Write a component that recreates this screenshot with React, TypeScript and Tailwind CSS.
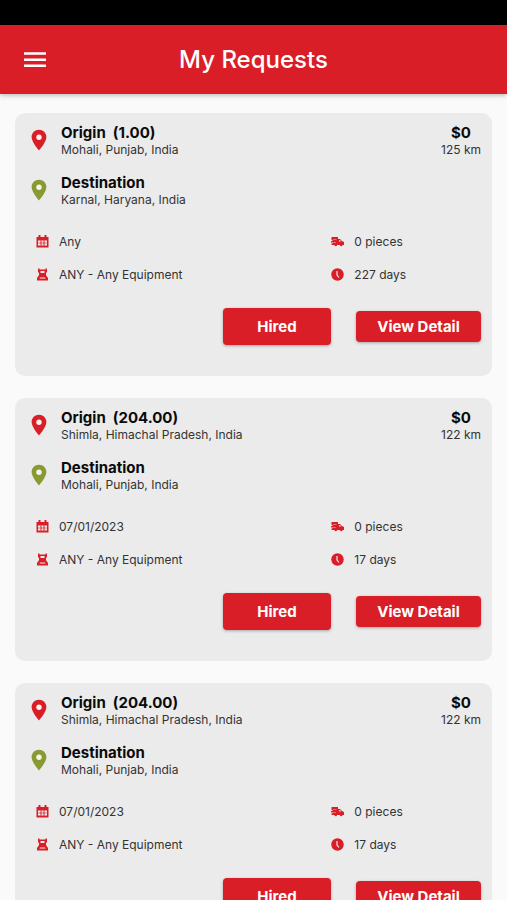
interface Request {
  id: number;
  weight: string;
  origin: string;
  destination: string;
  price: string;
  distance: string;
  date: string;
  equipment: string;
  pieces: string;
  age: string;
}

const requests: Request[] = [
  {
    id: 1,
    weight: "1.00",
    origin: "Mohali, Punjab, India",
    destination: "Karnal, Haryana, India",
    price: "$0",
    distance: "125 km",
    date: "Any",
    equipment: "ANY - Any Equipment",
    pieces: "0 pieces",
    age: "227 days",
  },
  {
    id: 2,
    weight: "204.00",
    origin: "Shimla, Himachal Pradesh, India",
    destination: "Mohali, Punjab, India",
    price: "$0",
    distance: "122 km",
    date: "07/01/2023",
    equipment: "ANY - Any Equipment",
    pieces: "0 pieces",
    age: "17 days",
  },
  {
    id: 3,
    weight: "204.00",
    origin: "Shimla, Himachal Pradesh, India",
    destination: "Mohali, Punjab, India",
    price: "$0",
    distance: "122 km",
    date: "07/01/2023",
    equipment: "ANY - Any Equipment",
    pieces: "0 pieces",
    age: "17 days",
  },
];

function MenuIcon() {
  return (
    <svg viewBox="0 0 30 30" className="size-[30px]" fill="currentColor" aria-hidden="true">
      <path d="M4 7.2h22v2.5H4zM4 13.4h22v2.5H4zM4 19.5h22V22H4z" />
    </svg>
  );
}

function PinIcon() {
  return (
    <svg viewBox="0 0 24 24" className="size-6" aria-hidden="true">
      <path
        d="M12 1.8c-4.1 0-7.4 3.2-7.4 7.3C4.6 14.4 12 22.4 12 22.4s7.4-8 7.4-13.3c0-4.1-3.3-7.3-7.4-7.3z"
        fill="currentColor"
      />
      <circle cx="12" cy="9.2" r="2.7" fill="#f7f3f0" />
    </svg>
  );
}

function CalendarIcon() {
  return (
    <svg viewBox="0 0 26 26" className="size-[13px]" fill="currentColor" aria-hidden="true">
      <path fillRule="evenodd" d="M1 4h24v21H1zM4 11v10h18V11z" />
      <path d="M5 0h4v5H5zM17 0h4v5h-4zM9 11h2v10H9zM15 11h2v10h-2z" />
      <path d="M4 15h18v2H4z" opacity="0.6" />
    </svg>
  );
}

function EquipmentIcon() {
  return (
    <svg viewBox="0 0 26 26" className="size-[13px]" fill="currentColor" aria-hidden="true">
      <path
        fillRule="evenodd"
        d="M4 1h3v2h12V1h3v8h-2v5l3 5h1v6H2v-6h1l3-5V9H4zM9 6v4h8V6zM8 19l-1 2h12l-1-2z"
      />
    </svg>
  );
}

function TruckIcon() {
  return (
    <svg viewBox="0 0 26 26" className="size-[13px]" fill="currentColor" aria-hidden="true">
      <path d="M1 4h13v4h4l4 4 4 2v6h-3a2.5 2.5 0 0 1-5 0h-6a2.5 2.5 0 0 1-5 0H1v-3h2v-2H0v-3h3v-2H1z" />
      <path d="M16 10v3h5l-3-3zM4 8h7v1H4zM2 14h8v1H2z" fill="#ebebeb" opacity="0.8" />
    </svg>
  );
}

function ClockIcon() {
  return (
    <svg viewBox="0 0 26 26" className="size-[13px]" aria-hidden="true">
      <circle cx="13" cy="13" r="12.5" fill="currentColor" />
      <path d="M12 6v8l4 5" fill="none" stroke="#ebebeb" strokeWidth="2.4" />
    </svg>
  );
}

function RequestCard({ request }: { request: Request }) {
  return (
    <article className="rounded-[10px] bg-[#ebebeb] pt-[11px] pr-[11px] pb-[31px] pl-3">
      {/* Route */}
      <div className="flex justify-between">
        <div className="flex items-start gap-[10px]">
          <span className="mt-1 text-[#d91e27]"><PinIcon /></span>
          <div>
            <h2 className="text-[15px] leading-[17px] font-bold whitespace-pre">{`Origin  (${request.weight})`}</h2>
            <p className="text-xs leading-[17px] text-[#333333]">{request.origin}</p>
          </div>
        </div>
        <div className="text-center">
          <p className="text-[15px] leading-[17px] font-bold">{request.price}</p>
          <p className="text-xs leading-[17px] text-[#333333]">{request.distance}</p>
        </div>
      </div>
      <div className="mt-4 flex items-start gap-[10px]">
        <span className="mt-1 text-[#8a9a33]"><PinIcon /></span>
        <div>
          <h2 className="text-[15px] leading-[17px] font-bold">Destination</h2>
          <p className="text-xs leading-[17px] text-[#333333]">{request.destination}</p>
        </div>
      </div>

      {/* Load details */}
      <ul className="mt-[25px] grid grid-cols-[2fr_1fr] gap-y-4 pr-0.5 pl-[9px] text-xs leading-[17px] text-[#333333]">
        <li className="flex items-center gap-[10px]">
          <span className="text-[#d91e27]"><CalendarIcon /></span>
          {request.date}
        </li>
        <li className="flex items-center gap-[10px]">
          <span className="text-[#d91e27]"><TruckIcon /></span>
          {request.pieces}
        </li>
        <li className="flex items-center gap-[10px]">
          <span className="text-[#d91e27]"><EquipmentIcon /></span>
          {request.equipment}
        </li>
        <li className="flex items-center gap-[10px]">
          <span className="text-[#d91e27]"><ClockIcon /></span>
          {request.age}
        </li>
      </ul>

      {/* Actions */}
      <div className="mt-[25px] flex items-center justify-end gap-[25px]">
        <button
          type="button"
          className="h-[37px] w-[108px] rounded-[4px] bg-[#d91e27] pt-0.5 text-[15px] font-bold text-white shadow-[0_1px_3px_rgba(0,0,0,0.3)]"
        >
          Hired
        </button>
        <button
          type="button"
          className="h-[31px] w-[125px] rounded-[4px] bg-[#d91e27] pt-0.5 text-[15px] font-bold text-white shadow-[0_1px_3px_rgba(0,0,0,0.3)]"
        >
          View Detail
        </button>
      </div>
    </article>
  );
}

export default function App() {
  return (
    <div className="flex h-screen flex-col bg-[#fafafa] font-['Inter',sans-serif] text-[#0a0a0a]">
      <div className="h-[25px] shrink-0 bg-black" />
      <header className="z-10 grid h-[69px] shrink-0 grid-cols-[1fr_auto_1fr] items-center bg-[#d91e27] px-5 text-white shadow-[0_1px_5px_rgba(0,0,0,0.3)]">
        <button type="button" aria-label="Open menu" className="justify-self-start">
          <MenuIcon />
        </button>
        <h1 className="text-2xl leading-8 font-medium">My Requests</h1>
      </header>
      <main className="flex min-h-0 flex-1 flex-col gap-[22px] overflow-y-auto px-[15px] pt-[19px]">
        {requests.map((request) => (
          <RequestCard key={request.id} request={request} />
        ))}
      </main>
    </div>
  );
}
